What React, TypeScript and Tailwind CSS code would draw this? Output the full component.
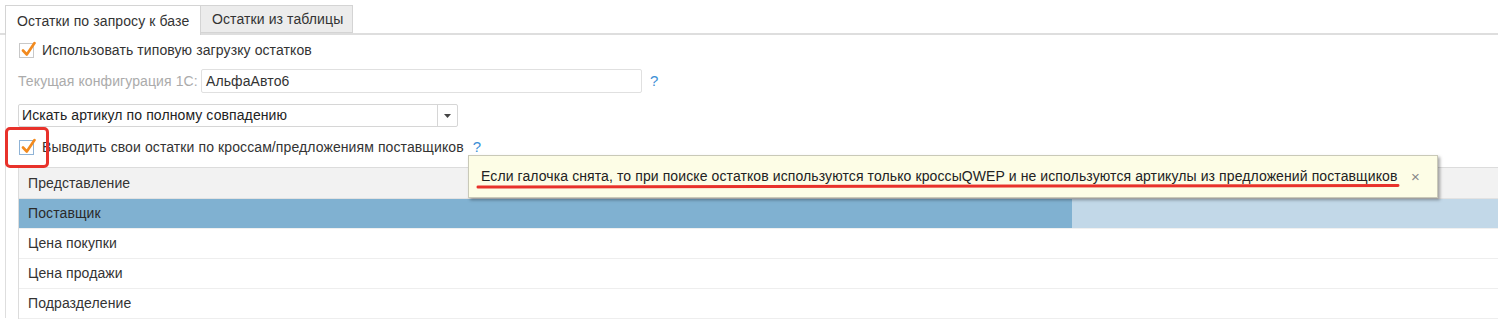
import React from "react";

function Check({ focused }: { focused?: boolean }) {
  return (
    <span
      className={`relative inline-block w-[15px] h-[15px] border bg-white shrink-0 ${
        focused ? "border-[#8fb3d6]" : "border-[#c8c8c8]"
      }`}
    >
      <svg
        className="absolute left-[1px] top-[-3px]"
        width="15"
        height="16"
        viewBox="0 0 15 16"
      >
        <path
          d="M2 9.5 L5.8 13.5 L13.5 2"
          fill="none"
          stroke="#f28a1e"
          strokeWidth="2.6"
          strokeLinecap="round"
          strokeLinejoin="round"
        />
      </svg>
    </span>
  );
}

export default function App() {
  const rows = ["Цена покупки", "Цена продажи", "Подразделение"];
  return (
    <div className="w-[1498px] h-[333px] bg-white relative overflow-hidden font-['Liberation_Sans',Arial,sans-serif] text-[14px] tracking-[0.1px] text-[#333]">
      {/* tabs */}
      <div className="pt-[5px] pl-[5px] flex border-b-2 border-[#dedede] h-[35px]">
        <div className="h-[30px] -mb-[2px] w-[196px] pl-[11px] flex items-center bg-white border border-b-0 border-[#d4d4d4] leading-none">
          Остатки по запросу к базе
        </div>
        <div className="h-[28px] w-[152px] pl-[11px] flex items-center bg-[#ececec] border border-l-0 border-[#d4d4d4] leading-none">
          Остатки из таблицы
        </div>
      </div>

      {/* content */}
      <div className="ml-[5px] border-l border-[#dedede] pl-[12px] h-[283px] flex flex-col">
        <div className="mt-[5px] h-[20px] flex items-center gap-[8px] pl-[1px]">
          <Check />
          <span>Использовать типовую загрузку остатков</span>
        </div>

        <div className="mt-[9px] h-[24px] flex items-center">
          <span className="text-[#ababab] w-[183px]">Текущая конфигурация 1С:</span>
          <div className="w-[441px] h-[24px] border border-[#e0e0e0] rounded-[2px] flex items-center pl-[4px] text-[#333]">
            АльфаАвто6
          </div>
          <span className="ml-[8px] text-[#3b8fd6] text-[15px]">?</span>
        </div>

        <div className="mt-[11px] w-[440px] h-[25px] border border-[#d6d6d6] rounded-[2px] flex items-center">
          <span className="flex-1 pl-[3px] text-[#222]">Искать артикул по полному совпадению</span>
          <div className="w-[20px] h-full border-l border-[#d6d6d6] flex items-center justify-center">
            <svg width="7" height="4" viewBox="0 0 7 4">
              <path d="M0 0 H7 L3.5 4 Z" fill="#444" />
            </svg>
          </div>
        </div>

        <div className="mt-[10px] h-[20px] flex items-center gap-[8px] pl-[1px]">
          <Check focused />
          <span>Выводить свои остатки по кроссам/предложениям поставщиков</span>
          <span className="ml-[1px] text-[#3b8fd6] text-[15px]">?</span>
        </div>

        {/* table */}
        <div className="mt-[10px] border-t border-l border-[#dcdcdc] flex flex-col">
          <div className="h-[31px] bg-[#f2f2f2] border-b border-[#e2e2e2] flex items-center pl-[9px]">
            Представление
          </div>
          <div className="h-[30px] flex border-b border-[#f0f0f0]">
            <div className="w-[1053px] bg-[#80b1d1] flex items-center pl-[9px] text-[#2a2a2a]">
              Поставщик
            </div>
            <div className="flex-1 bg-[#c2d8e8]" />
          </div>
          {rows.map((r) => (
            <div
              key={r}
              className="h-[30px] flex items-center pl-[9px] border-b border-[#eeeeee]"
            >
              {r}
            </div>
          ))}
        </div>
      </div>

      {/* red annotation box */}
      <div className="absolute left-[5px] top-[127px] w-[44px] h-[41px] border-[3px] border-[#e8322b] rounded-[5px]" />

      {/* tooltip */}
      <div className="absolute left-[468px] top-[155px] w-[970px] h-[43px] bg-[#fdfde6] border border-[#c9c9b8] shadow-[2px_2px_3px_rgba(0,0,0,0.35)] flex items-center pl-[12px]">
        <span className="text-[#222]">
          Если галочка снята, то при поиске остатков используются только кроссыQWEP и не используются артикулы из предложений поставщиков
        </span>
        <span className="absolute left-[942px] top-[10px] text-[#888] text-[15px]">×</span>
      </div>

      {/* red underline */}
      <svg className="absolute left-0 top-0 pointer-events-none" width="1498" height="333">
        <path
          d="M478 187 Q 900 184.5 1398 185.5"
          fill="none"
          stroke="#e8322b"
          strokeWidth="3"
          strokeLinecap="round"
        />
      </svg>
    </div>
  );
}
